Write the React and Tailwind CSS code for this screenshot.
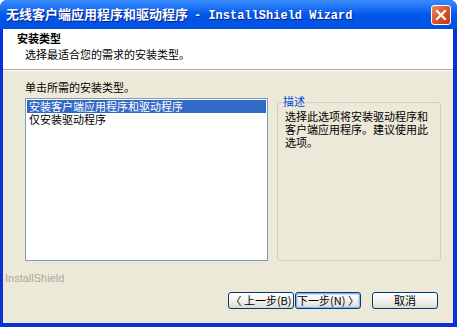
import React from 'react';

const cjk = { fontFamily: '"Noto Sans CJK SC", "Liberation Sans", sans-serif' };

const XpButton = ({ children, focused }) => (
  <button
    className={
      'h-[17px] w-[66px] rounded-[3px] border border-[#003c74] bg-gradient-to-b from-white via-[#f3f2ee] to-[#dcdad2] text-[11px] leading-none text-black flex items-center justify-center ' +
      (focused ? 'shadow-[inset_0_0_0_1px_#8fb3f0,inset_0_0_0_2px_#c8dbfa]' : '')
    }
    style={cjk}
  >
    {children}
  </button>
);

export default function App() {
  return (
    <div className="w-[457px] h-[327px] bg-[#0831d9] rounded-t-[7px] flex flex-col overflow-hidden">
      {/* Title bar */}
      <div className="h-[29px] shrink-0 flex items-center justify-between pl-[6px] pr-[6px] bg-gradient-to-b from-[#3a8cfb] via-[#0058ee] to-[#0050de] rounded-t-[7px]">
        <div className="flex items-baseline text-white font-bold [text-shadow:1px_1px_0_#0a1e8a]">
          <span className="text-[13px]" style={cjk}>无线客户端应用程序和驱动程序</span>
          <span className="text-[12px] ml-[6px]" style={{ fontFamily: '"Liberation Mono", monospace' }}>
            - InstallShield Wizard
          </span>
        </div>
        <div className="w-[20px] h-[20px] rounded-[3px] border border-white bg-gradient-to-br from-[#e88b6b] via-[#d9542a] to-[#c13b10] flex items-center justify-center">
          <svg width="12" height="12" viewBox="0 0 12 12">
            <path d="M2 2 L10 10 M10 2 L2 10" stroke="white" strokeWidth="2.2" strokeLinecap="square" />
          </svg>
        </div>
      </div>

      {/* Client area */}
      <div className="flex-1 flex flex-col ml-[3px] mr-[4px] mb-[4px] bg-[#ece9d8]">
        {/* Header */}
        <div className="h-[41px] shrink-0 bg-white border-b border-[#aca899] pl-[14px] pt-[1px] text-black" style={cjk}>
          <div className="text-[11px] font-bold leading-[16px]">安装类型</div>
          <div className="text-[11px] leading-[16px] pl-[8px]">选择最适合您的需求的安装类型。</div>
        </div>
        <div className="h-px bg-white shrink-0" />

        {/* Body */}
        <div className="flex-1 flex flex-col pl-[22px] pr-[12px] pt-[9px]" style={cjk}>
          <div className="text-[11px] leading-[14px] text-black">单击所需的安装类型。</div>
          <div className="flex gap-[9px] mt-[4px]">
            <div className="w-[243px] h-[163px] shrink-0 bg-white border border-[#7f9db9] p-[1px] text-[11px] leading-[13px]">
              <div className="bg-[#316ac5] text-white pl-[2px]">安装客户端应用程序和驱动程序</div>
              <div className="text-black pl-[2px]">仅安装驱动程序</div>
            </div>
            <div className="relative w-[164px] h-[159px] shrink-0 mt-[4px] border border-[#d0d0bf] rounded-[3px]">
              <div className="absolute -top-[9px] left-[4px] bg-[#ece9d8] px-[1px] text-[11px] leading-[14px] text-[#0046d5]">
                描述
              </div>
              <div className="pt-[7px] pl-[7px] pr-[4px] text-[11px] leading-[13px] text-black">
                选择此选项将安装驱动程序和<br />客户端应用程序。建议使用此<br />选项。
              </div>
            </div>
          </div>

          <div className="mt-[10px] -ml-[20px] text-[11px] text-[#aca899] leading-[14px]" style={{ fontFamily: '"Liberation Sans", sans-serif' }}>
            InstallShield
          </div>

          <div className="flex justify-end mt-[7px] mr-[3px]">
            <XpButton>〈 上一步(B)</XpButton>
            <div className="ml-[1px]">
              <XpButton focused>下一步(N) 〉</XpButton>
            </div>
            <div className="ml-[11px]">
              <XpButton>取消</XpButton>
            </div>
          </div>
        </div>
      </div>
    </div>
  );
}
